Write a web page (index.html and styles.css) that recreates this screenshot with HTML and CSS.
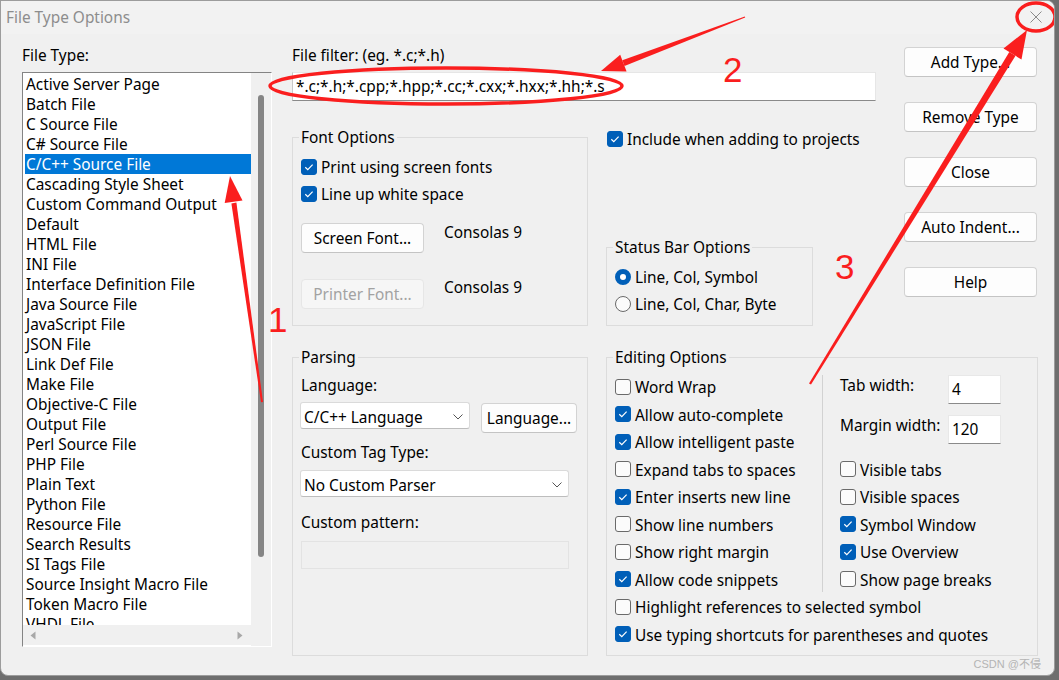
FILE: index.html
```html
<!DOCTYPE html>
<html>
<head>
<meta charset="utf-8">
<title>File Type Options</title>
<link rel="stylesheet" href="styles.css">
</head>
<body>
<div class="window">
  <div class="titlebar">
    <span class="title">File Type Options</span>
    <span class="close"><svg width="12" height="12" viewBox="0 0 12 12"><path d="M0.5 0.5L11.5 11.5M11.5 0.5L0.5 11.5" stroke="#8a8a8a" stroke-width="1" fill="none"/></svg></span>
  </div>
  <div class="content">
    <div class="left">
      <div class="lbl">File Type:</div>
      <div class="listbox">
        <div class="list-area">
          <div class="items">
            <div class="item">Active Server Page</div>
            <div class="item">Batch File</div>
            <div class="item">C Source File</div>
            <div class="item">C# Source File</div>
            <div class="item sel">C/C++ Source File</div>
            <div class="item">Cascading Style Sheet</div>
            <div class="item">Custom Command Output</div>
            <div class="item">Default</div>
            <div class="item">HTML File</div>
            <div class="item">INI File</div>
            <div class="item">Interface Definition File</div>
            <div class="item">Java Source File</div>
            <div class="item">JavaScript File</div>
            <div class="item">JSON File</div>
            <div class="item">Link Def File</div>
            <div class="item">Make File</div>
            <div class="item">Objective-C File</div>
            <div class="item">Output File</div>
            <div class="item">Perl Source File</div>
            <div class="item">PHP File</div>
            <div class="item">Plain Text</div>
            <div class="item">Python File</div>
            <div class="item">Resource File</div>
            <div class="item">Search Results</div>
            <div class="item">SI Tags File</div>
            <div class="item">Source Insight Macro File</div>
            <div class="item">Token Macro File</div>
            <div class="item">VHDL File</div>
          </div>
          <div class="hscroll">
            <svg width="6" height="9" viewBox="0 0 6 9"><path d="M5.5 0.5L0.5 4.5L5.5 8.5Z" fill="#a8a8a8"/></svg>
            <svg width="6" height="9" viewBox="0 0 6 9"><path d="M0.5 0.5L5.5 4.5L0.5 8.5Z" fill="#a8a8a8"/></svg>
          </div>
        </div>
        <div class="vscroll"><div class="thumb"></div></div>
      </div>
    </div>

    <div class="main">
      <div class="top">
        <div class="filter-part">
          <div class="lbl">File filter: (eg. *.c;*.h)</div>
          <div class="filter-input">*.c;*.h;*.cpp;*.hpp;*.cc;*.cxx;*.hxx;*.hh;*.s</div>
          <div class="groups">
            <fieldset class="group font-opts">
              <legend>Font Options</legend>
              <div class="chk"><span class="cb on"><svg width="16" height="16" viewBox="0 0 16 16"><path d="M4.3 8.2L6.8 10.6L11.6 5.6" stroke="#fff" stroke-width="1.2" fill="none"/></svg></span>Print using screen fonts</div>
              <div class="chk gap"><span class="cb on"><svg width="16" height="16" viewBox="0 0 16 16"><path d="M4.3 8.2L6.8 10.6L11.6 5.6" stroke="#fff" stroke-width="1.2" fill="none"/></svg></span>Line up white space</div>
              <div class="font-row">
                <button class="btn font-btn">Screen Font...</button>
                <span class="font-name">Consolas 9</span>
              </div>
              <div class="font-row printer">
                <button class="btn font-btn disabled">Printer Font...</button>
                <span class="font-name second">Consolas 9</span>
              </div>
            </fieldset>
            <div class="right-col">
              <div class="chk include"><span class="cb on"><svg width="16" height="16" viewBox="0 0 16 16"><path d="M4.3 8.2L6.8 10.6L11.6 5.6" stroke="#fff" stroke-width="1.2" fill="none"/></svg></span>Include when adding to projects</div>
              <fieldset class="group status">
                <legend>Status Bar Options</legend>
                <div class="chk"><span class="rb on"></span>Line, Col, Symbol</div>
                <div class="chk gap"><span class="rb"></span>Line, Col, Char, Byte</div>
              </fieldset>
            </div>
          </div>
        </div>
        <div class="buttons">
          <button class="btn">Add Type...</button>
          <button class="btn">Remove Type</button>
          <button class="btn">Close</button>
          <button class="btn">Auto Indent...</button>
          <button class="btn">Help</button>
        </div>
      </div>

      <div class="bottom">
        <fieldset class="group parsing">
          <legend>Parsing</legend>
          <div class="plbl">Language:</div>
          <div class="lang-row">
            <div class="select lang-select"><span>C/C++ Language</span><svg width="10" height="6" viewBox="0 0 10 6"><path d="M0.5 0.5L5 5L9.5 0.5" stroke="#555" stroke-width="1" fill="none"/></svg></div>
            <button class="btn lang-btn">Language...</button>
          </div>
          <div class="plbl tag-lbl">Custom Tag Type:</div>
          <div class="select tag-select"><span>No Custom Parser</span><svg width="10" height="6" viewBox="0 0 10 6"><path d="M0.5 0.5L5 5L9.5 0.5" stroke="#555" stroke-width="1" fill="none"/></svg></div>
          <div class="plbl pat-lbl">Custom pattern:</div>
          <div class="pattern-input"></div>
        </fieldset>

        <fieldset class="group editing">
          <legend>Editing Options</legend>
          <div class="ed-cols">
            <div class="ed-left">
              <div class="row"><span class="cb"></span>Word Wrap</div>
              <div class="row"><span class="cb on"><svg width="16" height="16" viewBox="0 0 16 16"><path d="M4.3 8.2L6.8 10.6L11.6 5.6" stroke="#fff" stroke-width="1.2" fill="none"/></svg></span>Allow auto-complete</div>
              <div class="row"><span class="cb on"><svg width="16" height="16" viewBox="0 0 16 16"><path d="M4.3 8.2L6.8 10.6L11.6 5.6" stroke="#fff" stroke-width="1.2" fill="none"/></svg></span>Allow intelligent paste</div>
              <div class="row"><span class="cb"></span>Expand tabs to spaces</div>
              <div class="row"><span class="cb on"><svg width="16" height="16" viewBox="0 0 16 16"><path d="M4.3 8.2L6.8 10.6L11.6 5.6" stroke="#fff" stroke-width="1.2" fill="none"/></svg></span>Enter inserts new line</div>
              <div class="row"><span class="cb"></span>Show line numbers</div>
              <div class="row"><span class="cb"></span>Show right margin</div>
              <div class="row"><span class="cb on"><svg width="16" height="16" viewBox="0 0 16 16"><path d="M4.3 8.2L6.8 10.6L11.6 5.6" stroke="#fff" stroke-width="1.2" fill="none"/></svg></span>Allow code snippets</div>
            </div>
            <div class="sep"></div>
            <div class="ed-right">
              <div class="num-block">
                <div class="num-row"><span class="num-lbl">Tab width:</span><div class="num-input">4</div></div>
                <div class="num-row second"><span class="num-lbl">Margin width:</span><div class="num-input">120</div></div>
              </div>
              <div class="row"><span class="cb"></span>Visible tabs</div>
              <div class="row"><span class="cb"></span>Visible spaces</div>
              <div class="row"><span class="cb on"><svg width="16" height="16" viewBox="0 0 16 16"><path d="M4.3 8.2L6.8 10.6L11.6 5.6" stroke="#fff" stroke-width="1.2" fill="none"/></svg></span>Symbol Window</div>
              <div class="row"><span class="cb on"><svg width="16" height="16" viewBox="0 0 16 16"><path d="M4.3 8.2L6.8 10.6L11.6 5.6" stroke="#fff" stroke-width="1.2" fill="none"/></svg></span>Use Overview</div>
              <div class="row"><span class="cb"></span>Show page breaks</div>
            </div>
          </div>
          <div class="row"><span class="cb"></span>Highlight references to selected symbol</div>
          <div class="row"><span class="cb on"><svg width="16" height="16" viewBox="0 0 16 16"><path d="M4.3 8.2L6.8 10.6L11.6 5.6" stroke="#fff" stroke-width="1.2" fill="none"/></svg></span>Use typing shortcuts for parentheses and quotes</div>
        </fieldset>
      </div>
    </div>
  </div>

  <div class="watermark">CSDN @不侵</div>

  <svg class="annot" width="1059" height="680" viewBox="0 0 1059 680">
    <g fill="#fa1e1e" stroke="none">
      <polygon points="263,402 261,402.3 231.4,203.4 236.4,202.6"/>
      <polygon points="230,176 242.5,200.5 224.7,203.1"/>
      <polygon points="745.2,17.5 744.8,16.5 622.3,60.3 624.5,66.0"/>
      <polygon points="601,71 626.6,71.5 620.2,54.7"/>
      <polygon points="811,384.5 809,383.5 1009.3,51.9 1015.5,55.7"/>
      <polygon points="1027,30 1021.5,59.5 1003.5,48.5"/>
    </g>
    <g fill="none" stroke="#fa1e1e" stroke-width="3.5">
      <ellipse cx="446" cy="86" rx="176" ry="18"/>
      <ellipse cx="1036" cy="17" rx="19" ry="14"/>
    </g>
    <g fill="#fa1e1e" font-family="Liberation Sans, Arial, sans-serif" font-size="35">
      <text x="268" y="332">1</text>
      <text x="723" y="82">2</text>
      <text x="835" y="279">3</text>
    </g>
  </svg>
</div>
</body>
</html>
```

FILE: styles.css
```css
* { box-sizing: border-box; }
html, body { margin: 0; height: 100%; }
body {
  background: #6e6e6e;
  font-family: "Noto Sans", "DejaVu Sans", sans-serif;
  font-size: 15.4px;
  color: #000;
  overflow: hidden;
}
.window {
  position: relative;
  width: 1055px;
  height: 676px;
  background: #f0f0f0;
  border: 1px solid #9c9c9c;
  border-radius: 0 8px 8px 8px;
  overflow: hidden;
}
.titlebar {
  height: 33px;
  display: flex;
  align-items: center;
  justify-content: space-between;
  background: #f2f2f2;
  padding-left: 5px;
}
.title { color: #8d8d8d; line-height: 20px; }
.close { width: 36px; display: flex; justify-content: center; align-items: center; margin-bottom: 1px; }
.close svg { display: block; }

.content {
  display: flex;
  padding: 11px 0 0 21px;
}
.lbl {
  height: 20px;
  padding-top: 2px;
  line-height: 18px;
  margin-bottom: 7px;
  white-space: nowrap;
}

/* list */
.left { width: 250px; }
.listbox {
  width: 250px;
  height: 575px;
  display: flex;
  border-top: 1px solid #848484;
  border-left: 1px solid #848484;
  border-right: 1px solid #ffffff;
  border-bottom: 1px solid #ffffff;
  box-shadow: inset -1px -1px 0 #e3e3e3;
}
.list-area {
  width: 228px;
  display: flex;
  flex-direction: column;
  background: #fff;
}
.items {
  height: 552px;
  overflow: hidden;
  padding-top: 1px;
}
.item {
  height: 20px;
  padding-top: 2px;
  line-height: 18px;
  margin-left: 2px;
  padding-left: 1px;
  white-space: nowrap;
}
.item.sel { background: #0078d7; color: #fff; }
.hscroll {
  height: 20px;
  background: #f0f0f0;
  display: flex;
  align-items: center;
  justify-content: space-between;
  padding: 0 8px 0 7px;
}
.hscroll svg { display: block; }
.vscroll {
  width: 20px;
  background: #f0f0f0;
  padding: 22px 0 0 7px;
}
.thumb { width: 6px; height: 462px; background: #858585; border-radius: 3px; }

/* main */
.main { width: 746px; margin-left: 20px; }
.top { display: flex; }
.filter-part { width: 584px; }
.filter-input {
  height: 29px;
  line-height: 27px;
  background: #fff;
  border: 1px solid #e6e6e6;
  border-left-color: #c8c8c8;
  border-bottom-color: #8a8a8a;
  padding-left: 3px;
  white-space: nowrap;
}
.groups { display: flex; margin-top: 26px; }

fieldset.group {
  margin: 0;
  min-width: 0;
  border: 1px solid #dcdcdc;
  padding: 0 8px;
}
fieldset.group legend {
  padding: 1px 2px 0;
  margin-left: -2px;
  line-height: 20px;
}

.chk { display: flex; align-items: center; height: 20px; gap: 4px; white-space: nowrap; }
.chk.gap { margin-top: 7px; }
.cb {
  width: 16px; height: 16px; flex: none;
  border-radius: 3px;
  border: 1px solid #6a6a6a;
  background: #fbfbfb;
}
.cb.on { background: #005fb8; border-color: #005fb8; }
.cb svg { display: block; margin: -1px; }
.rb {
  width: 16px; height: 16px; flex: none;
  border-radius: 50%;
  border: 1px solid #6a6a6a;
  background: #fbfbfb;
}
.rb.on { border: 5px solid #005fb8; background: #fff; }

.font-opts { width: 296px; height: 199px; padding-top: 9px !important; }
.font-row { display: flex; align-items: flex-start; margin-top: 19px; }
.font-row.printer { margin-top: 26px; }
.btn {
  height: 30px;
  padding: 0;
  font: inherit;
  color: #000;
  background: #fdfdfd;
  border: 1px solid #d3d3d3;
  border-bottom-color: #c4c4c4;
  border-radius: 4px;
  white-space: nowrap;
}
.font-btn { width: 123px; }
.btn.disabled { background: #f6f6f6; border-color: #e6e6e6; color: #a2a2a2; }
.font-name { margin-left: 20px; padding-top: 2px; line-height: 18px; margin-top: -1px; }
.font-name.second { margin-top: -2px; }

.right-col { width: 207px; margin-left: 18px; }
.chk.include { margin-top: 2px; margin-left: 1px; }
.status { width: 207px; height: 89px; margin-top: 88px !important; padding-top: 9px !important; }

.buttons {
  width: 133px;
  margin-left: 28px;
  margin-top: 2px;
  display: flex;
  flex-direction: column;
  gap: 25px;
}

/* bottom */
.bottom { display: flex; margin-top: 21px; gap: 18px; }
.parsing { width: 296px; height: 309px; padding-top: 7px !important; }
.plbl { height: 20px; padding-top: 2px; line-height: 18px; white-space: nowrap; }
.lang-row { display: flex; align-items: flex-start; margin-top: 7px; margin-left: -1px; }
.select {
  height: 27px;
  background: #fff;
  border: 1px solid #dadada;
  border-bottom-color: #bdbdbd;
  border-radius: 3px;
  display: flex;
  align-items: center;
  justify-content: space-between;
  padding: 3px 6px 0 3px;
  white-space: nowrap;
}
.select svg { display: block; }
.lang-select { width: 170px; }
.lang-btn { width: 96px; margin-left: 11px; margin-top: 1px; }
.tag-lbl { margin-top: 9px; }
.tag-select { width: 269px; margin-top: 8px; margin-left: -1px; }
.pat-lbl { margin-top: 15px; }
.pattern-input {
  width: 268px;
  height: 28px;
  margin-top: 9px;
  border: 1px solid #e3e3e3;
  background: #f0f0f0;
}

.editing { width: 432px; height: 309px; padding-top: 5px !important; }
.ed-cols { display: flex; }
.ed-left { width: 207px; }
.row {
  display: flex;
  align-items: center;
  height: 27.5px;
  padding-top: 2px;
  gap: 4px;
  white-space: nowrap;
}
.row .cb { margin-top: -2px; }
.sep { width: 1px; height: 217px; margin-top: 2px; background: #d2d2d2; }
.ed-right { margin-left: 17px; }
.num-block { height: 82.5px; padding-top: 2px; }
.num-row { display: flex; align-items: flex-start; }
.num-row.second { margin-top: 11px; }
.num-lbl { width: 108px; padding-top: 2px; line-height: 18px; }
.num-input {
  width: 53px;
  height: 29px;
  background: #fff;
  border: 1px solid #e8e8e8;
  border-bottom-color: #8a8a8a;
  padding-left: 3px;
  line-height: 27px;
}

.watermark {
  position: absolute;
  right: 13px;
  bottom: 4px;
  font-size: 11px;
  line-height: 14px;
  color: #b4b4b4;
  font-family: "Liberation Sans", "Noto Sans CJK SC", sans-serif;
}
.annot {
  position: absolute;
  left: -1px;
  top: -1px;
  pointer-events: none;
}
```
